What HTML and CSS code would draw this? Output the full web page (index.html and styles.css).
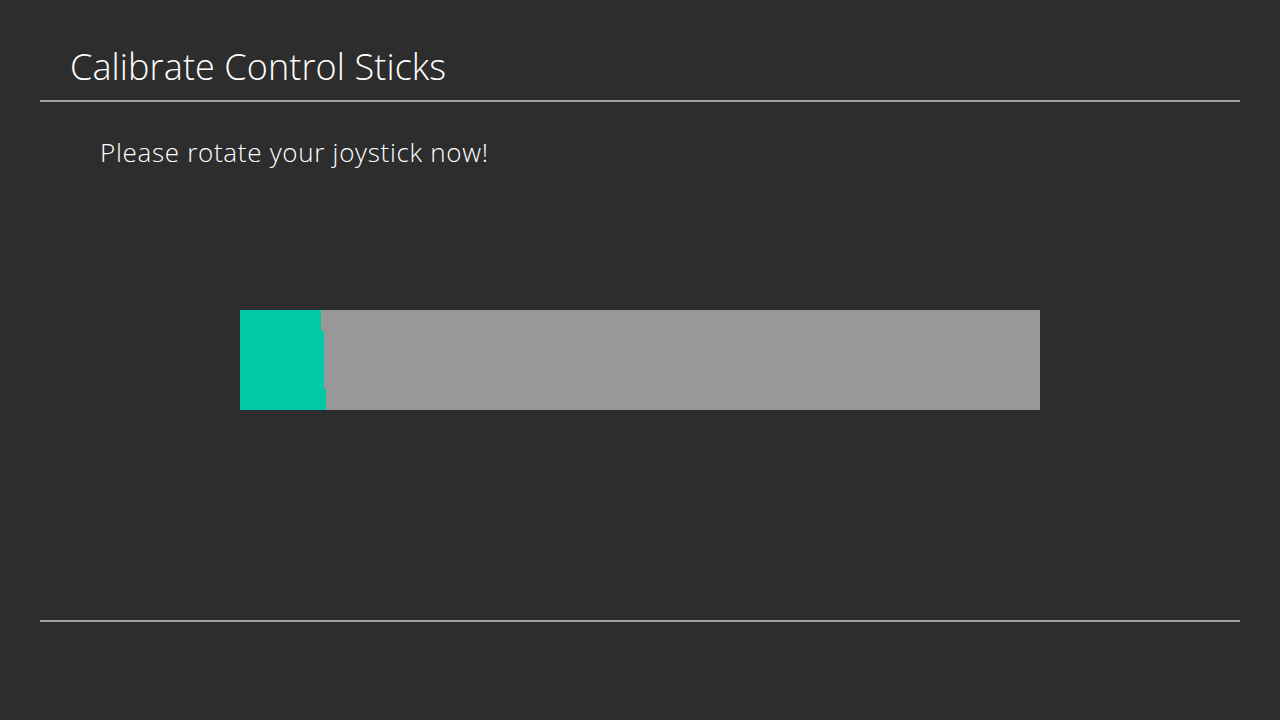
FILE: index.html
```
<!DOCTYPE html>
<html>
<head>
<meta charset="utf-8">
<link rel="stylesheet" href="styles.css">
</head>
<body>
<div class="screen">
  <header class="header">
    <h1 class="title">Calibrate Control Sticks</h1>
  </header>
  <main class="content">
    <p class="prompt">Please rotate your joystick now!</p>
    <div class="bar">
      <div class="fill">
        <div class="fill-row fill-top"></div>
        <div class="fill-row fill-mid"></div>
        <div class="fill-row fill-bot"></div>
      </div>
    </div>
  </main>
  <footer class="footer"></footer>
</div>
</body>
</html>
```
FILE: styles.css
```
html, body {
  margin: 0;
  padding: 0;
  background: #2d2d2d;
}
.screen {
  width: 1280px;
  height: 720px;
  display: flex;
  flex-direction: column;
  font-family: "Open Sans", "Noto Sans", sans-serif;
  color: #ffffff;
}
.header {
  margin: 0 40px;
  height: 100px;
  border-bottom: 2px solid #a0a0a0;
  padding-left: 30px;
  display: flex;
  align-items: flex-end;
}
.title {
  margin: 0 0 13px 0;
  font-size: 36px;
  font-weight: 300;
  line-height: 40px;
  letter-spacing: 0.1px;
}
.content {
  margin: 0 40px;
  height: 518px;
  border-bottom: 2px solid #a0a0a0;
  display: flex;
  flex-direction: column;
}
.prompt {
  margin: 34px 0 0 60px;
  font-size: 26px;
  font-weight: 300;
  line-height: 32px;
  letter-spacing: 0.7px;
}
.bar {
  margin: 142px 0 0 200px;
  width: 800px;
  height: 100px;
  background: #989898;
  display: flex;
}
.fill {
  display: flex;
  flex-direction: column;
}
.fill-row {
  background: #00c9a7;
}
.fill-top { width: 81px; height: 21px; }
.fill-mid { width: 84px; height: 58px; }
.fill-bot { width: 86px; height: 21px; }
```
